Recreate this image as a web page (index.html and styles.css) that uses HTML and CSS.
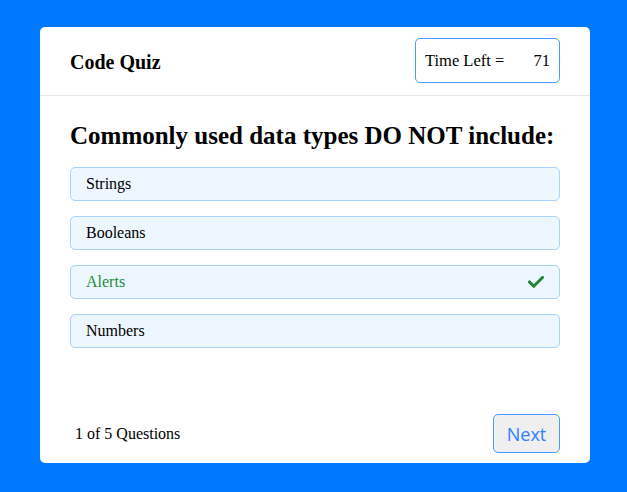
FILE: index.html
```html
<!DOCTYPE html>
<html>
<head>
<meta charset="utf-8">
<link rel="stylesheet" href="styles.css">
</head>
<body>
<div class="page">
  <div class="card">
    <header class="card-header">
      <h1 class="title">Code Quiz</h1>
      <div class="timer"><span>Time Left =</span><span>71</span></div>
    </header>
    <main class="card-body">
      <h2 class="question">Commonly used data types DO NOT include:</h2>
      <ul class="options">
        <li class="option">Strings</li>
        <li class="option">Booleans</li>
        <li class="option correct">Alerts
          <svg class="check" viewBox="0 0 16 12" width="16" height="12"><path d="M1.5 6.2 L5.8 10.2 L14.5 1.5" fill="none" stroke="#238636" stroke-width="3" stroke-linecap="square"/></svg>
        </li>
        <li class="option">Numbers</li>
      </ul>
    </main>
    <footer class="card-footer">
      <span class="progress">1 of 5 Questions</span>
      <button class="next">Next</button>
    </footer>
  </div>
</div>
</body>
</html>
```
FILE: styles.css
```css
html, body {
  margin: 0;
  padding: 0;
  background: #0077ff;
  height: 100%;
}
.page {
  padding: 27px 0 0 40px;
}
.card {
  width: 550px;
  height: 436px;
  background: #fff;
  border-radius: 5px;
  display: flex;
  flex-direction: column;
  font-family: "Liberation Serif", "Times New Roman", serif;
  color: #000;
}
.card-header {
  display: flex;
  justify-content: space-between;
  align-items: center;
  padding: 11px 30px 12px 30px;
  border-bottom: 1px solid #e6e6e6;
}
.title {
  margin: 0;
  font-size: 20px;
  line-height: 24px;
  padding-top: 2px;
  font-weight: bold;
}
.timer {
  width: 145px;
  height: 45px;
  box-sizing: border-box;
  border: 1px solid #4a9bff;
  border-radius: 5px;
  display: flex;
  justify-content: space-between;
  align-items: center;
  padding: 0 9px 0 9px;
  font-size: 16.5px;
}
.card-body {
  padding: 0 30px;
}
.question {
  margin: 26px 0 17px 0;
  font-size: 25px;
  font-weight: bold;
  line-height: 28px;
}
.options {
  list-style: none;
  margin: 0;
  padding: 0;
  display: flex;
  flex-direction: column;
  gap: 15px;
}
.option {
  height: 34px;
  box-sizing: border-box;
  border: 1px solid #a9d3fb;
  border-radius: 5px;
  background: #eef6ff;
  display: flex;
  align-items: center;
  justify-content: space-between;
  padding: 0 15px 0 15px;
  font-size: 16px;
}
.option.correct {
  color: #23903a;
}
.check {
  display: block;
}
.card-footer {
  margin-top: auto;
  display: flex;
  justify-content: space-between;
  align-items: center;
  padding: 0 30px 10px 35px;
}
.progress {
  font-size: 16px;
}
.next {
  width: 67px;
  height: 39px;
  box-sizing: border-box;
  border: 1px solid #4a9bff;
  border-radius: 5px;
  background: #efefef;
  color: #2f80ff;
  font-family: "Open Sans", sans-serif;
  font-size: 18px;
  padding: 0;
}
```
